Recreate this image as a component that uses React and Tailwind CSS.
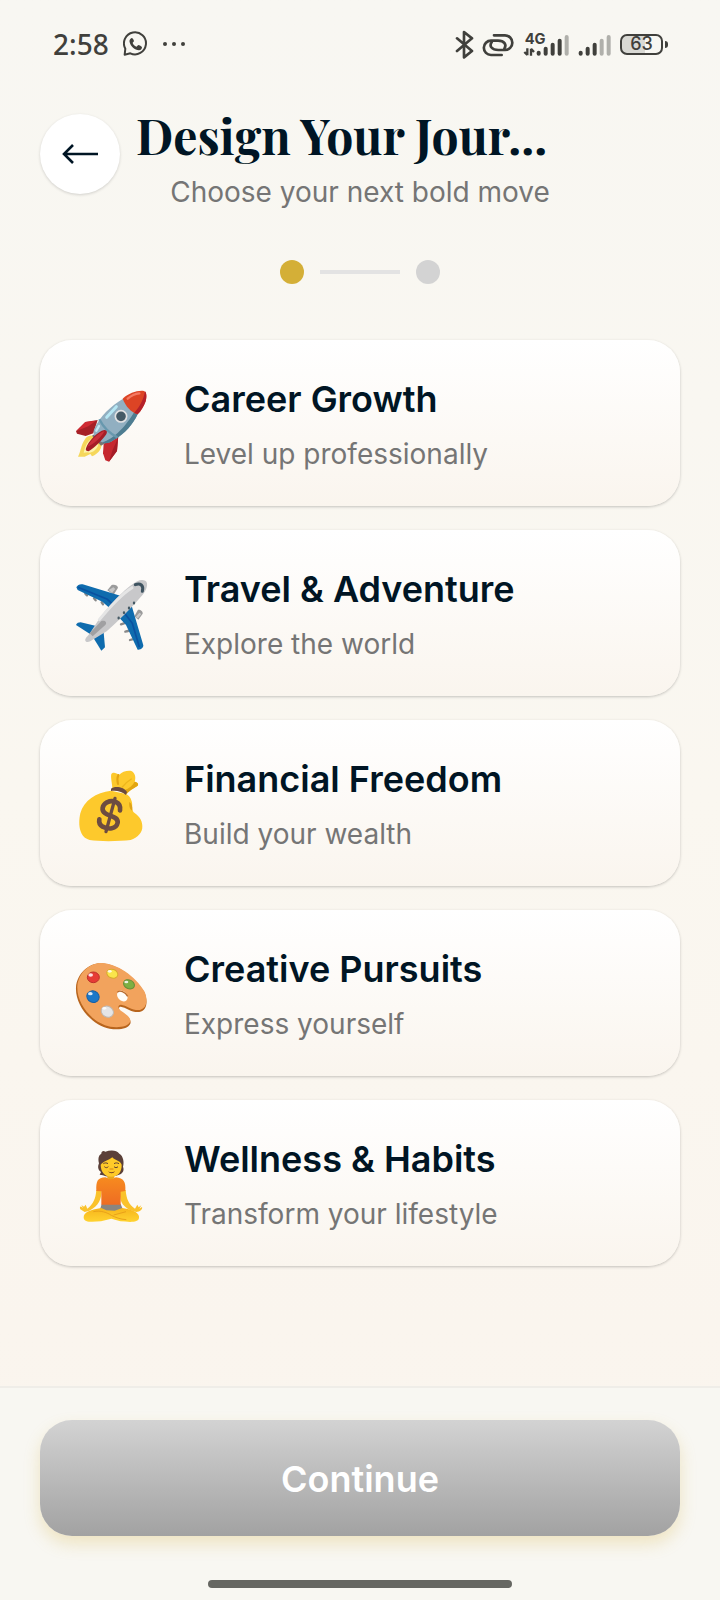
import React from 'react';

// ── Status bar icons ─────────────────────────────────────────────────────────
const WhatsappIcon = () => (
  <svg viewBox="280 37 78 78" className="w-[26px] h-[26px]" fill="none">
    <path
      d="M285 108 L287 90 A33 33 0 1 1 302 104 Z"
      stroke="#40403c" strokeWidth="6" strokeLinejoin="round"
    />
    <path
      d="M306 58 C301 60 298 66 300 71 C303 84 315 94 328 95 C334 95 337 90 337 86 C336 83 329 79 326 79 C323 80 322 84 320 84 C315 82 311 78 309 73 C309 71 313 69 313 67 C312 63 309 58 306 58 Z"
      fill="#40403c"
    />
  </svg>
);

const BluetoothIcon = () => (
  <svg viewBox="42 25 57 90" className="w-[19px] h-[30px]" fill="none" stroke="#40403c" strokeWidth="8" strokeLinejoin="round" strokeLinecap="round">
    <path d="M48 53 L93 91 L69 110 V34 L93 53 L48 91" />
  </svg>
);

const LinkIcon = () => (
  <svg viewBox="129 25 99 90" className="w-[33px] h-[30px]" fill="none" stroke="#40403c" strokeWidth="8" strokeLinecap="round">
    <path d="M188 103 H156 A21 21 0 0 1 156 60 H177 C196 60 204 72 196 84" />
    <path d="M165 44 H198 A21 21 0 0 1 198 88 H178 C158 88 150 76 158 65" />
  </svg>
);

const Bars = ({ x }) => (
  <g stroke="#40403c" strokeWidth="12" strokeLinecap="round">
    <path d={`M${x} 96 v3`} />
    <path d={`M${x + 21} 84 v15`} />
    <path d={`M${x + 42} 72 v27`} />
    <path d={`M${x + 84} 49 v50`} stroke="#b0b0ab" />
  </g>
);

const Signal4G = () => (
  <svg viewBox="252 25 141 90" className="w-[47px] h-[30px]" fill="none">
    <Bars x={299} />
    <path d="M362 60 v39" stroke="#40403c" strokeWidth="12" strokeLinecap="round" />
    <path d="M265 83 V104 M265 103 L256 94 M276 105 V84 M276 84 L285 94" stroke="#40403c" strokeWidth="7" />
    <text x="257" y="70" fill="#40403c" className="text-[44px] font-bold font-[Inter,sans-serif]">4G</text>
  </svg>
);

const Signal = () => (
  <svg viewBox="414 25 102 90" className="w-[34px] h-[30px]" fill="none">
    <Bars x={422} />
    <path d="M485 60 v39" stroke="#b0b0ab" strokeWidth="12" strokeLinecap="round" />
  </svg>
);

// ── Category drawings ────────────────────────────────────────────────────────
const Rocket = () => (
  <>
    <path d="M57 257 C66 239 66 221 77 206 C82 197 91 193 101 194 L128 222 C126 237 116 249 99 256 L94 249 L77 257 Z" fill="#f5d75b" />
    <path d="M74 245 C79 224 86 209 99 204 L118 222 C113 237 96 249 85 244 Z" fill="#fdf3ac" />
    <path d="M51 181 L79 153 L116 147 L103 187 L80 195 L54 188 Z" fill="#a62027" />
    <path d="M51 181 L79 153 L111 149 L88 166 Z" fill="#cf2a32" />
    <path d="M134 218 L178 193 L174 240 L150 272 L139 268 L132 247 Z" fill="#c62830" />
    <path d="M173 210 L178 193 L174 240 L150 272 L160 239 Z" fill="#a51d27" />
    <path d="M99 194 L111 186 L141 215 L126 224 Z" fill="#757575" />
    <path d="M191 84 C157 104 122 137 106 174 C101 185 105 193 112 201 L124 211 C134 219 150 218 163 208 C199 188 222 160 236 130 Z" fill="#91afc1" />
    <path d="M226 122 L236 130 C222 160 199 188 163 208 C152 217 138 219 129 214 C165 205 204 161 226 122 Z" fill="#4e7d91" />
    <path d="M121 145 C133 169 151 187 175 199" stroke="#6898ae" strokeWidth="7" fill="none" />
    <path d="M143 139 L172 107" stroke="#b5e6f3" strokeWidth="9" strokeLinecap="round" />
    <path d="M112 179 L120 165" stroke="#c1e8f5" strokeWidth="7" strokeLinecap="round" />
    <path d="M191 83 C210 66 236 57 255 60 C264 64 263 79 260 91 C254 107 247 119 236 130 C215 123 200 106 191 83 Z" fill="#dc4425" />
    <path d="M258 61 C263 66 263 79 260 91 C254 107 247 119 236 130 L226 125 C242 108 254 85 258 61 Z" fill="#b4202a" />
    <path d="M206 83 C217 73 229 68 241 67" stroke="#f47a63" strokeWidth="7" fill="none" strokeLinecap="round" />
    <circle cx="186" cy="136" r="17" fill="#455a66" stroke="#e2e2e3" strokeWidth="5" />
    <path d="M81 232 C88 210 116 181 136 177 C147 178 145 187 138 195 C124 213 104 232 89 241 C82 241 79 237 81 232 Z" fill="#a51d27" />
    <path d="M85 227 C96 207 116 187 137 180 C126 200 106 218 85 227 Z" fill="#c9303a" />
  </>
);

const Plane = () => (
  <>
    <path d="M145 88 L158 72 C166 69 176 73 177 80 L164 101 Z" fill="#9b9b9b" />
    <path d="M226 166 L237 146 C245 145 252 151 251 158 L238 176 Z" fill="#9b9b9b" />
    <path d="M149 87 L163 79 L169 84 L159 96 Z M230 168 L241 155 L247 159 L237 172 Z" fill="#c7c7c7" />
    <path d="M79 98 l5 5 M105 112 l5 6 M128 124 l4 6 M186 190 l9 -3 M199 212 l8 -2 M213 237 l7 -2" stroke="#888" strokeWidth="7" strokeLinecap="round" />
    <path d="M52 79 C56 72 63 68 71 70 L184 104 L149 139 L130 122 L56 87 Z" fill="#0f6cae" />
    <path d="M57 79 L145 115 L158 127" stroke="#0b51a0" strokeWidth="5" fill="none" />
    <path d="M176 165 L218 134 L253 253 C253 261 245 267 236 266 L201 192 Z" fill="#0f6cae" />
    <path d="M198 158 L220 187 L241 258" stroke="#0b51a0" strokeWidth="5" fill="none" />
    <path d="M51 192 C53 186 59 184 65 184 L115 196 L93 219 Z" fill="#0f6cae" />
    <path d="M103 230 L133 203 L138 259 L127 269 Z" fill="#0f6cae" />
    <path d="M79 239 C77 232 86 226 91 219 L118 178 C142 143 199 79 235 61 C246 55 262 56 264 67 C266 80 257 97 245 108 C215 143 176 182 143 211 L95 240 C87 245 81 244 79 239 Z" fill="#c8c8ca" />
    <path d="M121 176 C149 142 190 98 219 80" stroke="#e5e5e5" strokeWidth="9" fill="none" strokeLinecap="round" />
    <path d="M92 217 L127 180 C138 176 145 184 139 192 L101 226 Z" fill="#a0a0a2" />
    <path d="M229 71 C244 65 255 73 250 91" stroke="#3e5360" strokeWidth="9" fill="none" strokeLinecap="round" />
    <path d="M179 172 v-2 M195 156 v-2 M210 142 v-2 M225 127 v-2" stroke="#465a65" strokeWidth="7" strokeLinecap="round" />
  </>
);

const MoneyBag = () => (
  <>
    <path d="M160 112 C160 99 154 79 157 69 C162 62 173 66 180 72 C188 63 204 58 217 60 C229 66 231 80 227 92 C237 94 240 100 235 105 C220 114 208 120 203 130 Z" fill="#fdc92c" />
    <path d="M196 118 C210 112 222 103 227 92 C237 94 240 100 235 105 C220 114 210 121 202 128 Z" fill="#e2a510" />
    <path d="M190 108 C198 98 207 90 217 84" stroke="#edb51c" strokeWidth="4" fill="none" strokeLinecap="round" />
    <path d="M178 72 C173 83 175 92 177 99" stroke="#e4a413" strokeWidth="6" fill="none" strokeLinecap="round" />
    <path d="M156 119 C111 125 74 148 64 187 C56 224 63 260 92 267 C121 272 183 271 215 267 C236 260 251 245 250 225 C250 206 237 193 224 184 C216 174 222 164 218 151 C215 138 208 132 201 129 Z" fill="#fdc92c" />
    <path d="M211 153 C218 157 221 167 220 179 C213 176 209 166 211 153 Z" fill="#dfa317" />
    <path d="M156 113 C167 103 197 108 204 123 L201 132 C187 120 171 118 156 120 Z" fill="#6b4a40" />
    <path d="M168 142 L141 242" stroke="#6d4c41" strokeWidth="10" strokeLinecap="round" />
    <path d="M183 178 C187 153 161 146 144 154 C129 163 126 178 139 187 C152 196 178 197 176 215 C172 235 148 236 131 227 C123 222 119 215 121 205" stroke="#6d4c41" strokeWidth="14" fill="none" strokeLinecap="round" />
  </>
);

const Palette = () => (
  <>
    <path
      d="M51 139 C54 97 91 66 126 67 C172 68 228 107 256 154 C266 176 267 209 241 213 C220 216 201 199 185 197 C177 197 179 207 188 214 C201 223 219 234 214 248 C207 264 180 267 152 263 C98 253 48 193 51 139 Z"
      fill="#b8651e"
    />
    <path
      d="M55 135 C59 94 93 65 128 66 C173 67 229 105 256 151 C267 174 265 202 243 207 C222 210 202 193 186 191 C174 193 177 204 188 211 C201 220 218 231 213 243 C206 257 180 261 154 257 C100 247 52 189 55 135 Z"
      fill="#f2a35d"
    />
    <ellipse cx="190" cy="165" rx="14" ry="18" transform="rotate(-42 190 165)" fill="#fffdf9" />
    <path d="M175 154 C181 146 199 152 206 166" stroke="#b96b2d" strokeWidth="4" fill="none" />
    <g strokeWidth="3">
      <ellipse cx="103" cy="109" rx="18" ry="16" fill="#e63b35" stroke="#bd302b" />
      <ellipse cx="160" cy="98" rx="17" ry="13" transform="rotate(20 160 98)" fill="#fae54b" stroke="#d7aa2d" />
      <ellipse cx="210" cy="130" rx="17" ry="13" transform="rotate(25 210 130)" fill="#7daf42" stroke="#668d38" />
      <ellipse cx="102" cy="167" rx="19" ry="17" transform="rotate(25 102 167)" fill="#1b78c9" stroke="#185fa5" />
      <ellipse cx="145" cy="212" rx="19" ry="16" transform="rotate(30 145 212)" fill="#e5e5e6" stroke="#bfb8b2" />
    </g>
    <g fill="#fff" opacity="0.85">
      <ellipse cx="95" cy="102" rx="7" ry="5" />
      <ellipse cx="152" cy="91" rx="6" ry="4" />
      <ellipse cx="202" cy="123" rx="6" ry="4" />
      <ellipse cx="94" cy="158" rx="7" ry="5" />
      <ellipse cx="136" cy="202" rx="6" ry="4" />
    </g>
  </>
);

const Meditation = () => (
  <>
    <defs>
      <linearGradient id="shirt" x1="0" y1="0" x2="0" y2="1">
        <stop offset="0" stopColor="#f78b1f" />
        <stop offset="1" stopColor="#ee6c23" />
      </linearGradient>
      <linearGradient id="legs" x1="0" y1="0" x2="0" y2="1">
        <stop offset="0" stopColor="#f7b51b" />
        <stop offset="1" stopColor="#ffd331" />
      </linearGradient>
    </defs>
    <path d="M112 177 L128 177 C128 204 119 225 91 239 L77 243 L64 235 C61 229 64 225 67 227 L72 231 L67 222 L75 227 L80 221 L85 233 C103 219 110 203 112 177 Z" fill="#fac22b" />
    <path d="M183 177 L200 177 C202 204 209 220 228 233 L235 221 L239 229 L247 223 L241 233 L249 228 C252 235 242 242 232 243 C205 238 184 221 183 196 Z" fill="#fac22b" />
    <path d="M128 219 H185 L192 236 L157 244 L123 236 Z" fill="#8a8580" />
    <path d="M74 260 C73 244 92 236 127 231 L142 238 L167 239 L190 231 C224 236 243 247 240 261 C238 276 211 273 184 271 L157 263 L126 271 C99 273 75 275 74 260 Z" fill="url(#legs)" />
    <path d="M103 242 C125 237 145 245 157 253 C169 259 184 265 202 266 M164 252 L201 242" stroke="#e9a11a" strokeWidth="3" fill="none" />
    <path d="M112 180 C111 151 115 140 139 139 C151 144 161 144 171 139 C194 141 201 153 199 180 L185 182 V221 H127 V181 Z" fill="url(#shirt)" />
    <path d="M127 68 C127 61 133 58 139 62 C155 57 173 57 181 68 C193 75 196 93 192 107 C197 119 190 129 178 132 C161 138 142 138 132 133 L122 131 L126 123 C116 117 116 106 120 97 C117 84 118 73 127 68 Z" fill="#5b4039" />
    <path d="M145 128 H166 V141 C160 146 150 146 145 141 Z" fill="#eaa51c" />
    <path d="M125 101 C133 91 149 88 160 79 C166 88 184 88 188 101 C189 124 175 137 157 137 C138 137 125 123 125 101 Z" fill="#ffca28" />
    <path d="M133 98 C138 95 143 95 147 98 M165 98 C169 95 175 95 180 98 M136 107 C140 111 144 111 148 107 M165 107 C169 111 173 111 177 107" stroke="#624032" strokeWidth="3" fill="none" />
    <path d="M147 121 C153 125 161 125 168 121 C164 129 152 129 147 121 Z" fill="#764122" />
    <path d="M153 114 h9" stroke="#e49a1c" strokeWidth="4" strokeLinecap="round" />
  </>
);

const CATEGORIES = [
  { art: Rocket,     title: 'Career Growth',      subtitle: 'Level up professionally' },
  { art: Plane,      title: 'Travel & Adventure', subtitle: 'Explore the world' },
  { art: MoneyBag,   title: 'Financial Freedom',  subtitle: 'Build your wealth' },
  { art: Palette,    title: 'Creative Pursuits',  subtitle: 'Express yourself' },
  { art: Meditation, title: 'Wellness & Habits',  subtitle: 'Transform your lifestyle' },
];

// ─────────────────────────────────────────────────────────────────────────────
const StatusBar = () => (
  <div className="h-[88px] pl-[53px] pr-[52px] flex items-center justify-between text-[#40403c]">
    <div className="flex items-center gap-[14px]">
      <span className="text-[28px] leading-8 font-medium font-[Noto_Sans,sans-serif]">2:58</span>
      <WhatsappIcon />
      <div className="flex gap-[5px] items-center">
        <span className="w-1 h-1 rounded-full bg-[#40403c]" />
        <span className="w-1 h-1 rounded-full bg-[#40403c]" />
        <span className="w-1 h-1 rounded-full bg-[#40403c]" />
      </div>
    </div>
    <div className="flex items-center gap-2">
      <BluetoothIcon />
      <LinkIcon />
      <Signal4G />
      <Signal />
      <div className="flex items-center gap-[2px]">
        <div className="w-[43px] h-[21px] rounded-[7px] border-2 border-[#40403c] bg-linear-to-r from-[#d9d9d4] from-60% to-[#f8f7f2] to-60% flex items-center justify-center text-[18px] leading-none font-medium font-[Inter,sans-serif]">
          63
        </div>
        <span className="w-[3px] h-[7px] rounded-r-sm bg-[#40403c]" />
      </div>
    </div>
  </div>
);

const CategoryCard = ({ art: Art, title, subtitle }) => (
  <button
    type="button"
    className="w-full flex items-center gap-9 px-9 pt-[35px] pb-[34px] rounded-[32px] text-left bg-linear-to-b from-white to-[#faf5ee] shadow-[0_1px_3px_rgba(0,0,0,0.22)]"
  >
    <svg viewBox="51 51 216 216" className="w-[72px] h-[72px] shrink-0 overflow-visible" aria-hidden="true">
      <Art />
    </svg>
    <span className="flex flex-col gap-[13px] min-w-0">
      <span className="text-[36px] leading-[48px] font-semibold text-[#001524]">{title}</span>
      <span className="text-[28px] leading-[36px] text-[#757575]">{subtitle}</span>
    </span>
  </button>
);

const App = () => (
  <div className="min-h-screen flex flex-col font-[Inter,sans-serif] bg-linear-to-b from-[#f8f7f2] via-[#faf7f0] to-[#faf4ed]">
    <StatusBar />

    {/* Header */}
    <header className="px-10 pt-5 flex items-start gap-4">
      <button
        type="button"
        aria-label="Back"
        className="w-20 h-20 mt-1.5 shrink-0 rounded-full bg-white flex items-center justify-center shadow-[0_1px_3px_rgba(0,0,0,0.16)]"
      >
        <svg viewBox="0 0 36 20" className="w-9 h-5" fill="none" stroke="#001524" strokeWidth="2.6">
          <path d="M36 10 H2 M11 1 L2 10 L11 19" />
        </svg>
      </button>
      <div className="flex-1 min-w-0 mr-24">
        <h1 className="text-[48px] leading-[54px] font-bold text-[#001524] whitespace-nowrap font-[Playfair_Display,Liberation_Serif,serif]">
          Design Your Jour...
        </h1>
        <p className="mt-2.5 text-[28px] leading-10 text-[#757575] text-center whitespace-nowrap">Choose your next bold move</p>
      </div>
    </header>

    {/* Steps */}
    <div className="pt-12 pb-14 flex items-center justify-center gap-4">
      <span className="w-6 h-6 rounded-full bg-[#d4af37]" />
      <span className="w-20 h-1 bg-[#e3e3e3]" />
      <span className="w-6 h-6 rounded-full bg-[#d3d3d3]" />
    </div>

    <main className="flex-1 px-10 pb-10 flex flex-col gap-6">
      {CATEGORIES.map((item) => (
        <CategoryCard key={item.title} {...item} />
      ))}
    </main>

    {/* Footer */}
    <footer className="px-10 pt-8 pb-3 border-t-2 border-[#efede8] bg-[#f8f7f2] flex flex-col items-center">
      <button
        type="button"
        className="w-full pt-[35px] pb-[33px] rounded-[32px] bg-linear-to-b from-[#d3d3d3] to-[#a2a2a2] text-white text-[36px] leading-[48px] font-semibold shadow-[0_8px_16px_rgba(212,175,55,0.25)]"
      >
        Continue
      </button>
      <span className="mt-11 w-[304px] h-2 rounded-full bg-[#666762]" />
    </footer>
  </div>
);

export default App;
